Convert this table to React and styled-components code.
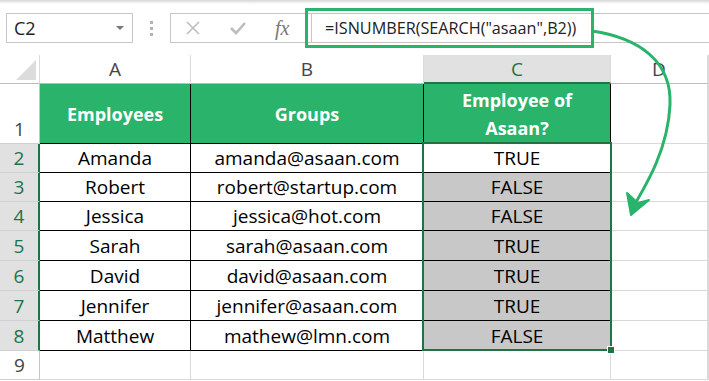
import React from 'react';
import styled, {createGlobalStyle} from 'styled-components';

const GREEN = '#2ab36b';
const DARK_GREEN = '#217346';

const GlobalStyle = createGlobalStyle`
  html, body {
    margin: 0;
    padding: 0;
    background: #fff;
  }
  body {
    font-family: 'Open Sans', 'Liberation Sans', sans-serif;
    overflow: hidden;
  }
`;

const Page = styled.div`
  position: relative;
  width: 709px;
  height: 381px;
  overflow: hidden;
  background: #fff;
`;

const TopShade = styled.div`
  height: 4px;
  background: linear-gradient(#d6d6d6, #fff);
`;

const FormulaRow = styled.div`
  display: flex;
  align-items: center;
  height: 30px;
  margin-top: 9px;
  padding-left: 6px;
`;

const NameBox = styled.div`
  box-sizing: border-box;
  width: 127px;
  height: 30px;
  border: 1px solid #c6c6c6;
  display: flex;
  align-items: center;
  justify-content: space-between;
  padding: 0 8px 0 7px;
  font-size: 18px;
  color: #222;
`;

const DropArrow = styled.span`
  width: 0;
  height: 0;
  border-left: 4px solid transparent;
  border-right: 4px solid transparent;
  border-top: 4px solid #777;
`;

const Grip = styled.div`
  display: flex;
  flex-direction: column;
  gap: 3px;
  margin: 0 17px;
  span {
    width: 3px;
    height: 3px;
    background: #b3b3b3;
  }
`;

const FormulaBar = styled.div`
  box-sizing: border-box;
  flex: 1;
  height: 30px;
  display: flex;
  border: 1px solid #c6c6c6;
  border-right: none;
`;

const Buttons = styled.div`
  box-sizing: border-box;
  width: 140px;
  flex-shrink: 0;
  display: flex;
  align-items: center;
  padding-left: 14px;
  gap: 28px;
`;

const Fx = styled.span`
  font-family: 'Liberation Serif', serif;
  font-style: italic;
  font-size: 20px;
  color: #777;
`;

const FormulaInput = styled.div`
  position: relative;
  flex: 1;
  display: flex;
  align-items: center;
  border-left: 1px solid #c6c6c6;
  padding-left: 13px;
  font-size: 16.2px;
  color: #222;
`;

const Callout = styled.div`
  position: absolute;
  left: -7px;
  top: -6px;
  width: 289px;
  height: 40px;
  box-sizing: border-box;
  border: 3px solid ${GREEN};
`;

const Sheet = styled.div`
  position: relative;
  display: grid;
  grid-template-columns: 40px 151px 233px 187px 97px 1fr;
  grid-template-rows: 29px 60px 29px 29px 29px 30px 30px 30px 30px 29px;
  margin-top: 12px;
`;

const Cell = styled.div`
  box-sizing: border-box;
  display: flex;
  align-items: center;
  justify-content: center;
  text-align: center;
  font-size: 19px;
  line-height: 28px;
  color: #000;
  background: ${p => p.$fill || '#fff'};
  border-right: 1px solid ${p => (p.$table ? '#000' : '#d9d9d9')};
  border-bottom: 1px solid ${p => (p.$table ? '#000' : '#d9d9d9')};
`;

const HeadCell = styled(Cell)`
  background: ${GREEN};
  color: #fff;
  font-weight: 700;
  font-size: 18px;
`;

const ColHead = styled(Cell)`
  font-size: 19px;
  color: ${p => (p.$active ? DARK_GREEN : '#444')};
  background: ${p => (p.$active ? '#e1e1e1' : '#fff')};
  border-right: 1px solid #dadada;
  border-bottom: ${p => (p.$active ? `2px solid ${DARK_GREEN}` : '1px solid #bdbdbd')};
`;

const Corner = styled(ColHead)`
  position: relative;
  &::after {
    content: '';
    position: absolute;
    right: 3px;
    bottom: 3px;
    border-left: 20px solid transparent;
    border-bottom: 20px solid #dcdcdc;
  }
`;

const RowHead = styled(Cell)`
  font-size: 19px;
  color: ${p => (p.$active ? DARK_GREEN : '#444')};
  background: ${p => (p.$active ? '#e1e1e1' : '#fff')};
  align-items: ${p => (p.$bottom ? 'flex-end' : 'center')};
  border-right: ${p => (p.$active ? `2px solid ${DARK_GREEN}` : '1px solid #c6c6c6')};
  border-bottom: 1px solid #d0d0d0;
`;

const Selection = styled.div`
  position: absolute;
  left: 422px;
  top: 87px;
  width: 190px;
  height: 209px;
  box-sizing: border-box;
  border: 2px solid ${DARK_GREEN};
  pointer-events: none;
  &::after {
    content: '';
    position: absolute;
    right: -5px;
    bottom: -5px;
    width: 6px;
    height: 6px;
    background: ${DARK_GREEN};
    border: 1px solid #fff;
  }
`;

const Arrow = styled.svg`
  position: absolute;
  left: 0;
  top: 0;
  pointer-events: none;
`;

const rows = [
  ['Amanda', 'amanda@asaan.com', 'TRUE'],
  ['Robert', 'robert@startup.com', 'FALSE'],
  ['Jessica', 'jessica@hot.com', 'FALSE'],
  ['Sarah', 'sarah@asaan.com', 'TRUE'],
  ['David', 'david@asaan.com', 'TRUE'],
  ['Jennifer', 'jennifer@asaan.com', 'TRUE'],
  ['Matthew', 'mathew@lmn.com', 'FALSE'],
];

export default function App() {
  return (
    <Page>
      <GlobalStyle />
      <TopShade />
      <FormulaRow>
        <NameBox>
          C2
          <DropArrow />
        </NameBox>
        <Grip>
          <span />
          <span />
          <span />
        </Grip>
        <FormulaBar>
          <Buttons>
            <svg width="16" height="16" viewBox="0 0 16 16">
              <path d="M2 2 L14 14 M14 2 L2 14" stroke="#bdbdbd" strokeWidth="1.6" fill="none" />
            </svg>
            <svg width="18" height="16" viewBox="0 0 18 16">
              <path d="M2 8 L7 13 L16 3" stroke="#bdbdbd" strokeWidth="2.6" fill="none" />
            </svg>
            <Fx>fx</Fx>
          </Buttons>
          <FormulaInput>
            =ISNUMBER(SEARCH("asaan",B2))
            <Callout />
          </FormulaInput>
        </FormulaBar>
      </FormulaRow>

      <Sheet>
        <Corner />
        <ColHead>A</ColHead>
        <ColHead>B</ColHead>
        <ColHead $active>C</ColHead>
        <ColHead>D</ColHead>
        <ColHead />

        <RowHead $bottom>1</RowHead>
        <HeadCell $table>Employees</HeadCell>
        <HeadCell $table>Groups</HeadCell>
        <HeadCell $table>
          Employee of
          <br />
          Asaan?
        </HeadCell>
        <Cell />
        <Cell />

        {rows.map(([name, mail, result], i) => (
          <React.Fragment key={name}>
            <RowHead $active>{i + 2}</RowHead>
            <Cell $table>{name}</Cell>
            <Cell $table>{mail}</Cell>
            <Cell $table $fill={i === 0 ? '#fff' : '#c8c8c8'}>
              {result}
            </Cell>
            <Cell />
            <Cell />
          </React.Fragment>
        ))}

        <RowHead>9</RowHead>
        <Cell />
        <Cell />
        <Cell />
        <Cell />
        <Cell />

        <Selection />
      </Sheet>

      <Arrow width="709" height="381" viewBox="0 0 709 381">
        <path
          d="M592 31 C640 38 672 62 670 105 C668 148 648 182 632 209"
          stroke={GREEN}
          strokeWidth="3"
          fill="none"
        />
        <path d="M631 215 L627 193 L638 203 L649 200 Z" fill={GREEN} stroke={GREEN} strokeWidth="2" strokeLinejoin="round" />
      </Arrow>
    </Page>
  );
}
